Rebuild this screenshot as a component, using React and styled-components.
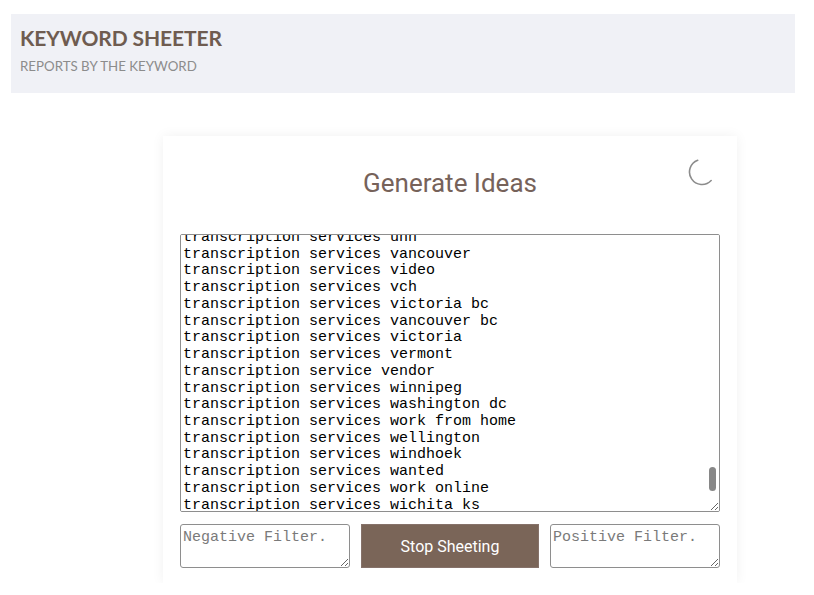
import React, { useLayoutEffect, useRef } from 'react';
import styled, { createGlobalStyle } from 'styled-components';

const GlobalStyle = createGlobalStyle`
  html, body { margin: 0; padding: 0; background: #ffffff; }
  body { font-family: Roboto, "Liberation Sans", sans-serif; }
`;

const Page = styled.div`
  padding: 14px 19px 0 11px;
`;

const Header = styled.header`
  background: #f0f1f6;
  padding: 11px 9px 18px;
`;

const Title = styled.h1`
  margin: 0;
  font-family: Lato, "DejaVu Sans", sans-serif;
  font-weight: 700;
  font-size: 21px;
  line-height: 26px;
  letter-spacing: -0.1px;
  color: #6f5c50;
`;

const Subtitle = styled.p`
  margin: 7px 0 0;
  font-family: Lato, "DejaVu Sans", sans-serif;
  font-size: 13.3px;
  line-height: 17px;
  color: #8c8c8c;
`;

const Card = styled.section`
  position: relative;
  box-sizing: border-box;
  width: 574px;
  margin: 43px 0 0 152px;
  padding: 32px 17px 15px;
  background: #ffffff;
  box-shadow: 0 0 12px rgba(0, 0, 0, 0.06);
`;

const CardTitle = styled.h2`
  margin: 0 0 36px;
  text-align: center;
  font-family: Roboto, "Liberation Sans", sans-serif;
  font-weight: 400;
  font-size: 26px;
  line-height: 30px;
  color: #76625a;
`;

const Spinner = styled.svg`
  position: absolute;
  top: 22px;
  right: 21px;
  width: 28px;
  height: 28px;
`;

const OutputWrap = styled.div`
  position: relative;
`;

const Output = styled.textarea`
  display: block;
  box-sizing: border-box;
  width: 100%;
  height: 278px;
  margin: 0;
  padding: 2px;
  border: 1px solid #8e8e8e;
  border-radius: 2px;
  font-family: "Liberation Mono", "Courier New", monospace;
  font-size: 15px;
  line-height: 16.73px;
  color: #000000;
  background: #ffffff;
  white-space: pre;
  overflow: auto;
  scrollbar-width: none;
  outline: none;
`;

const Thumb = styled.div`
  position: absolute;
  left: 529px;
  top: 233px;
  width: 7px;
  height: 24px;
  border-radius: 4px;
  background: #878787;
  pointer-events: none;
`;

const Controls = styled.div`
  display: grid;
  grid-template-columns: 170px 1fr 170px;
  gap: 11px;
  margin-top: 12px;
  height: 44px;
`;

const Filter = styled.textarea`
  box-sizing: border-box;
  width: 100%;
  height: 44px;
  margin: 0;
  padding: 4px 2px 2px;
  border: 1px solid #8e8e8e;
  border-radius: 3px;
  font-family: "Liberation Mono", "Courier New", monospace;
  font-size: 15px;
  color: #111111;
  outline: none;
  &::placeholder { color: #7a7a7a; }
`;

const StopButton = styled.button`
  box-sizing: border-box;
  height: 44px;
  border: 1px solid #86726a;
  background: #7a6558;
  color: #ffffff;
  font-family: Roboto, "Liberation Sans", sans-serif;
  font-size: 16px;
  cursor: pointer;
`;

const lines = [
  'transcription services uk',
  'transcription services usa',
  'transcription services utah',
  'transcription services uae',
  'transcription services unn',
  'transcription services vancouver',
  'transcription services video',
  'transcription services vch',
  'transcription services victoria bc',
  'transcription services vancouver bc',
  'transcription services victoria',
  'transcription services vermont',
  'transcription service vendor',
  'transcription services winnipeg',
  'transcription services washington dc',
  'transcription services work from home',
  'transcription services wellington',
  'transcription services windhoek',
  'transcription services wanted',
  'transcription services work online',
  'transcription services wichita ks',
  'transcription services worcester',
  'transcription services wales',
  'transcription services york',
];

export default function App() {
  const ref = useRef(null);
  useLayoutEffect(() => {
    if (ref.current) ref.current.scrollTop = 7 + 4 * 16.73;
  }, []);
  return (
    <>
      <GlobalStyle />
      <Page>
        <Header>
          <Title>KEYWORD SHEETER</Title>
          <Subtitle>REPORTS BY THE KEYWORD</Subtitle>
        </Header>
        <Card>
          <CardTitle>Generate Ideas</CardTitle>
          <Spinner viewBox="0 0 28 28">
            <path
              d="M9.72 2.25 A12.5 12.5 0 1 0 23.14 22.53"
              fill="none"
              stroke="#8c8c8c"
              strokeWidth="1.6"
              strokeLinecap="round"
            />
          </Spinner>
          <OutputWrap>
            <Output ref={ref} readOnly value={lines.join('\n')} spellCheck={false} />
            <Thumb />
          </OutputWrap>
          <Controls>
            <Filter placeholder="Negative Filter." />
            <StopButton>Stop Sheeting</StopButton>
            <Filter placeholder="Positive Filter." />
          </Controls>
        </Card>
      </Page>
    </>
  );
}
